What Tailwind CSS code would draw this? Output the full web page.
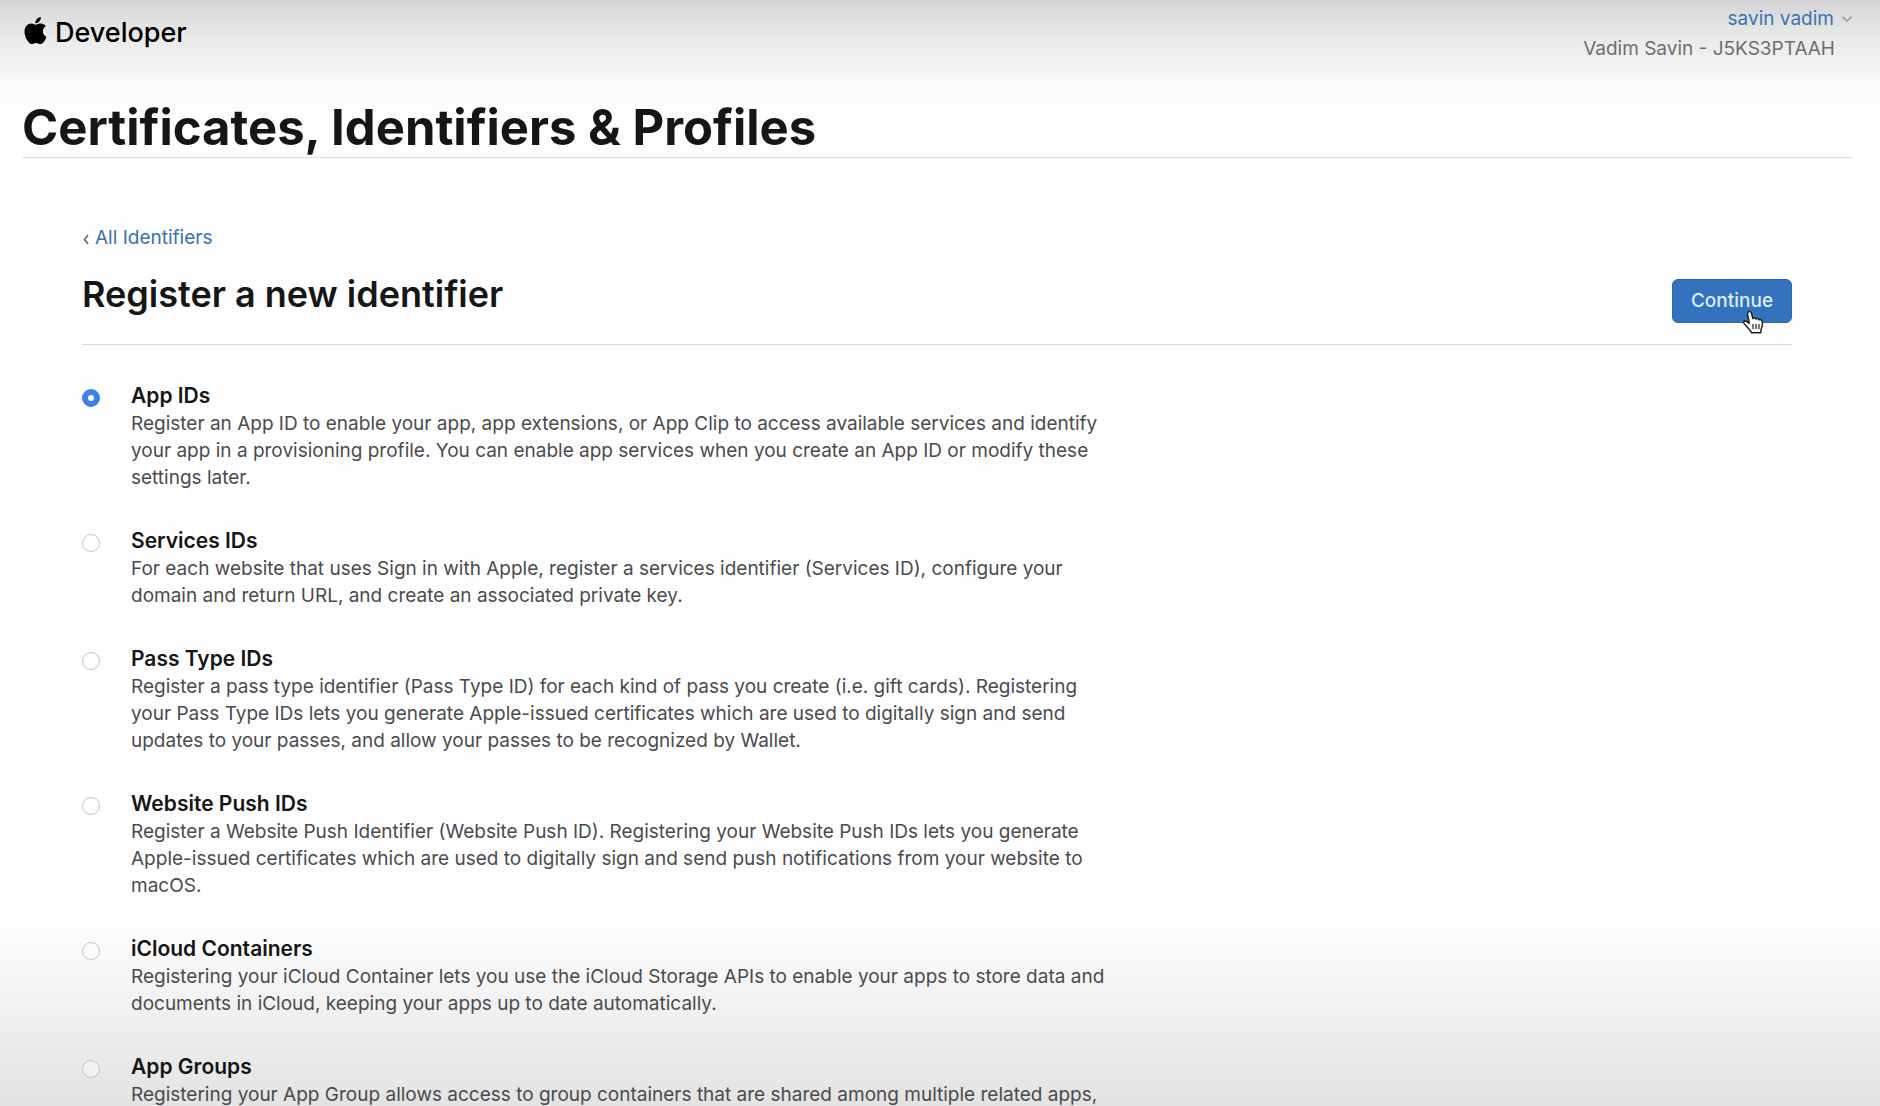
<!DOCTYPE html>
<html lang="en">
<head>
<meta charset="utf-8">
<meta name="viewport" content="width=device-width, initial-scale=1">
<title>Certificates, Identifiers &amp; Profiles</title>
<script src="https://cdn.jsdelivr.net/npm/@tailwindcss/browser@4"></script>
</head>
<body class="relative h-screen overflow-hidden bg-[#fefefe] font-['Inter','Liberation_Sans',sans-serif] text-[#161617]">
  <!-- Edge shading at the top and bottom of the window -->
  <div class="pointer-events-none absolute inset-x-0 top-0 -z-10 h-[120px] bg-[linear-gradient(to_bottom,#d3d3d5_0px,#dededf_16px,#ececec_44px,#f3f3f3_70px,#fafafa_80px,#fefefe_120px)]"></div>
  <div class="pointer-events-none absolute inset-x-0 bottom-0 -z-10 h-[190px] bg-linear-to-b from-[#fefefe] to-[#e3e3e3]"></div>

  <header class="flex items-start justify-between pl-6 pr-7">
    <a href="#" class="mt-[17px] flex h-8 items-center gap-2 text-[27px] font-medium text-black">
      <svg class="-mt-[6px] h-[27px] w-[23px]" viewBox="0 0 814 1000" fill="currentColor" aria-hidden="true"><path d="M788.1 340.9c-5.8 4.5-108.200 62.200-108.200 190.500 0 148.400 130.300 200.900 134.200 202.200-.6 3.200-20.700 71.900-68.700 141.900-42.800 61.600-87.500 123.100-155.500 123.100s-85.500-39.500-164-39.500c-76.500 0-103.700 40.800-165.900 40.800s-105.600-57-155.500-127C46.700 790.700 0 663 0 541.800c0-194.400 126.400-297.500 250.800-297.500 66.100 0 121.200 43.400 162.700 43.400 39.500 0 101.100-46 176.300-46 28.500 0 130.900 2.600 198.300 99.200zm-234-181.500c31.100-36.900 53.100-88.100 53.100-139.300 0-7.100-.6-14.300-1.900-20.100-50.600 1.900-110.800 33.700-147.100 75.800-28.500 32.400-55.100 83.600-55.100 135.500 0 7.800 1.300 15.600 1.900 18.100 3.200.6 8.400 1.300 13.600 1.300 45.400 0 102.500-30.400 135.500-71.300z"/></svg>
      <span>Developer</span>
    </a>
    <div class="flex flex-col pt-1 text-[19px] leading-[30px]">
      <a href="#" class="flex items-center justify-end gap-2 text-[#3a72b0]">
        <span>savin vadim</span>
        <svg class="h-[6px] w-[10px]" viewBox="0 0 10 6" fill="none" stroke="#98989b" stroke-width="1.500" aria-hidden="true"><path d="M.5.7 5 5 9.500.7"/></svg>
      </a>
      <p class="pr-[17px] text-[#6e6e72]">Vadim Savin - J5KS3PTAAH</p>
    </div>
  </header>

  <h1 class="mt-8 ml-[22px] mr-7 h-[62px] border-b border-[#dfdfe0] text-[49px] leading-[64px] font-bold">Certificates, Identifiers &amp; Profiles</h1>

  <main class="mt-[66px] ml-[82px] mr-[88px]">
    <a href="#" class="flex items-center gap-1 text-[19px] leading-7 text-[#3a72b0]">
      <svg class="mt-[2px] h-[11px] w-[9px]" viewBox="0 0 9 11" fill="none" stroke="#5d6470" stroke-width="1.600" aria-hidden="true"><path d="M6 1 2.500 5.500 6 10"/></svg>
      <span>All Identifiers</span>
    </a>
    <div class="mt-4 flex items-start justify-between border-b border-[#dcdcdd] pb-[21px]">
      <h2 class="text-[36px] leading-[52px] font-semibold">Register a new identifier</h2>
      <button type="button" class="relative mt-[11px] h-11 w-[120px] cursor-pointer rounded-md border border-[#2b68ad] bg-[#3472bd] text-[19px] font-medium text-[#d9efff]">
        Continue
        <svg class="absolute top-[30px] left-[69px] h-6 w-[23px]" viewBox="0 0 23 24" fill="#fff" stroke="#222" stroke-width="1.500" stroke-linejoin="round" aria-hidden="true"><path d="M7.500 1.500c1 0 1.700.6 2 1.700l1.300 5.300c.8-1 2.600-.8 3 .5.900-.9 2.600-.5 2.900.8 1.300-.8 3.300 0 3.600 1.600.4 2.700.3 5.200-1.200 8l-.3 3.300H9.500c-.5-1.800-1.800-3-3.200-4.500L2 13.500c-1-1.300.3-2.900 1.900-2.300l3.400 2.100L5.500 4c-.3-1.400.7-2.500 2-2.500z"/><path fill="none" stroke-width="1.200" d="M11 14v5M14 14v5M17 14v5"/></svg>
      </button>
    </div>

    <form class="mt-[37px] flex max-w-[1030px] flex-col gap-9">
      <div class="flex gap-[31px]">
        <input type="radio" name="identifier" id="app" checked class="mt-[7px] size-[18px] shrink-0 appearance-none rounded-full border border-[#c4c4c6] bg-white/40 checked:border-[6px] checked:border-[#3a83e8] checked:bg-white">
        <div>
          <label for="app" class="block text-[21px] leading-7 font-semibold">App IDs</label>
          <p class="max-w-[980px] text-[19px] leading-[27px] text-[#4b4b4d]">Register an App ID to enable your app, app extensions, or App Clip to access available services and identify your app in a provisioning profile. You can enable app services when you create an App ID or modify these settings later.</p>
        </div>
      </div>
      <div class="flex gap-[31px]">
        <input type="radio" name="identifier" id="services" class="mt-[7px] size-[18px] shrink-0 appearance-none rounded-full border border-[#c4c4c6] bg-white/40 checked:border-[6px] checked:border-[#3a83e8] checked:bg-white">
        <div>
          <label for="services" class="block text-[21px] leading-7 font-semibold">Services IDs</label>
          <p class="max-w-[980px] text-[19px] leading-[27px] text-[#4b4b4d]">For each website that uses Sign in with Apple, register a services identifier (Services ID), configure your domain and return URL, and create an associated private key.</p>
        </div>
      </div>
      <div class="flex gap-[31px]">
        <input type="radio" name="identifier" id="pass" class="mt-[7px] size-[18px] shrink-0 appearance-none rounded-full border border-[#c4c4c6] bg-white/40 checked:border-[6px] checked:border-[#3a83e8] checked:bg-white">
        <div>
          <label for="pass" class="block text-[21px] leading-7 font-semibold">Pass Type IDs</label>
          <p class="max-w-[980px] text-[19px] leading-[27px] text-[#4b4b4d]">Register a pass type identifier (Pass Type ID) for each kind of pass you create (i.e. gift cards). Registering your Pass Type IDs lets you generate Apple-issued certificates which are used to digitally sign and send updates to your passes, and allow your passes to be recognized by Wallet.</p>
        </div>
      </div>
      <div class="flex gap-[31px]">
        <input type="radio" name="identifier" id="push" class="mt-[7px] size-[18px] shrink-0 appearance-none rounded-full border border-[#c4c4c6] bg-white/40 checked:border-[6px] checked:border-[#3a83e8] checked:bg-white">
        <div>
          <label for="push" class="block text-[21px] leading-7 font-semibold">Website Push IDs</label>
          <p class="max-w-[980px] text-[19px] leading-[27px] text-[#4b4b4d]">Register a Website Push Identifier (Website Push ID). Registering your Website Push IDs lets you generate Apple-issued certificates which are used to digitally sign and send push notifications from your website to macOS.</p>
        </div>
      </div>
      <div class="flex gap-[31px]">
        <input type="radio" name="identifier" id="icloud" class="mt-[7px] size-[18px] shrink-0 appearance-none rounded-full border border-[#c4c4c6] bg-white/40 checked:border-[6px] checked:border-[#3a83e8] checked:bg-white">
        <div>
          <label for="icloud" class="block text-[21px] leading-7 font-semibold">iCloud Containers</label>
          <p class="max-w-[980px] text-[19px] leading-[27px] text-[#4b4b4d]">Registering your iCloud Container lets you use the iCloud Storage APIs to enable your apps to store data and documents in iCloud, keeping your apps up to date automatically.</p>
        </div>
      </div>
      <div class="flex gap-[31px]">
        <input type="radio" name="identifier" id="groups" class="mt-[7px] size-[18px] shrink-0 appearance-none rounded-full border border-[#c4c4c6] bg-white/40 checked:border-[6px] checked:border-[#3a83e8] checked:bg-white">
        <div>
          <label for="groups" class="block text-[21px] leading-7 font-semibold">App Groups</label>
          <p class="max-w-[980px] text-[19px] leading-[27px] text-[#4b4b4d]">Registering your App Group allows access to group containers that are shared among multiple related apps,</p>
        </div>
      </div>
    </form>
  </main>
</body>
</html>
